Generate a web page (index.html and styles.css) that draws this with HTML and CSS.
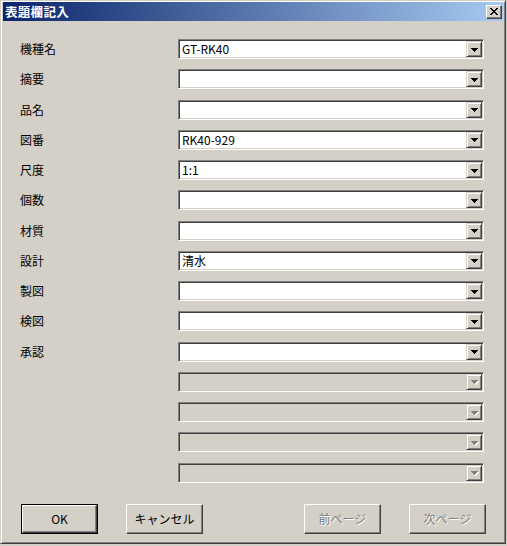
FILE: index.html
```html
<!DOCTYPE html>
<html lang="ja">
<head>
<meta charset="utf-8">
<title>表題欄記入</title>
<link rel="stylesheet" href="styles.css">
</head>
<body>
<div class="window">
  <div class="titlebar">
    <span class="title">表題欄記入</span>
    <span class="close"><svg width="8" height="7" viewBox="0 0 8 7" shape-rendering="crispEdges"><path fill="#000" d="M0 0h2v1H0zM6 0h2v1H6zM1 1h2v1H1zM5 1h2v1H5zM2 2h4v1H2zM3 3h2v1H3zM2 4h4v1H2zM1 5h2v1H1zM5 5h2v1H5zM0 6h2v1H0zM6 6h2v1H6z"/></svg></span>
  </div>
  <div class="client">
    <div class="form">
      <div class="label">機種名</div>
      <div class="combo"><span class="value">GT-RK40</span><span class="drop"><svg width="7" height="4" viewBox="0 0 7 4" shape-rendering="crispEdges"><path fill="#000" d="M0 0h7v1H0zM1 1h5v1H1zM2 2h3v1H2zM3 3h1v1H3z"/></svg></span></div>

      <div class="label">摘要</div>
      <div class="combo"><span class="value"></span><span class="drop"><svg width="7" height="4" viewBox="0 0 7 4" shape-rendering="crispEdges"><path fill="#000" d="M0 0h7v1H0zM1 1h5v1H1zM2 2h3v1H2zM3 3h1v1H3z"/></svg></span></div>

      <div class="label">品名</div>
      <div class="combo"><span class="value"></span><span class="drop"><svg width="7" height="4" viewBox="0 0 7 4" shape-rendering="crispEdges"><path fill="#000" d="M0 0h7v1H0zM1 1h5v1H1zM2 2h3v1H2zM3 3h1v1H3z"/></svg></span></div>

      <div class="label">図番</div>
      <div class="combo"><span class="value">RK40-929</span><span class="drop"><svg width="7" height="4" viewBox="0 0 7 4" shape-rendering="crispEdges"><path fill="#000" d="M0 0h7v1H0zM1 1h5v1H1zM2 2h3v1H2zM3 3h1v1H3z"/></svg></span></div>

      <div class="label">尺度</div>
      <div class="combo"><span class="value">1:1</span><span class="drop"><svg width="7" height="4" viewBox="0 0 7 4" shape-rendering="crispEdges"><path fill="#000" d="M0 0h7v1H0zM1 1h5v1H1zM2 2h3v1H2zM3 3h1v1H3z"/></svg></span></div>

      <div class="label">個数</div>
      <div class="combo"><span class="value"></span><span class="drop"><svg width="7" height="4" viewBox="0 0 7 4" shape-rendering="crispEdges"><path fill="#000" d="M0 0h7v1H0zM1 1h5v1H1zM2 2h3v1H2zM3 3h1v1H3z"/></svg></span></div>

      <div class="label">材質</div>
      <div class="combo"><span class="value"></span><span class="drop"><svg width="7" height="4" viewBox="0 0 7 4" shape-rendering="crispEdges"><path fill="#000" d="M0 0h7v1H0zM1 1h5v1H1zM2 2h3v1H2zM3 3h1v1H3z"/></svg></span></div>

      <div class="label">設計</div>
      <div class="combo"><span class="value">清水</span><span class="drop"><svg width="7" height="4" viewBox="0 0 7 4" shape-rendering="crispEdges"><path fill="#000" d="M0 0h7v1H0zM1 1h5v1H1zM2 2h3v1H2zM3 3h1v1H3z"/></svg></span></div>

      <div class="label">製図</div>
      <div class="combo"><span class="value"></span><span class="drop"><svg width="7" height="4" viewBox="0 0 7 4" shape-rendering="crispEdges"><path fill="#000" d="M0 0h7v1H0zM1 1h5v1H1zM2 2h3v1H2zM3 3h1v1H3z"/></svg></span></div>

      <div class="label">検図</div>
      <div class="combo"><span class="value"></span><span class="drop"><svg width="7" height="4" viewBox="0 0 7 4" shape-rendering="crispEdges"><path fill="#000" d="M0 0h7v1H0zM1 1h5v1H1zM2 2h3v1H2zM3 3h1v1H3z"/></svg></span></div>

      <div class="label">承認</div>
      <div class="combo"><span class="value"></span><span class="drop"><svg width="7" height="4" viewBox="0 0 7 4" shape-rendering="crispEdges"><path fill="#000" d="M0 0h7v1H0zM1 1h5v1H1zM2 2h3v1H2zM3 3h1v1H3z"/></svg></span></div>

      <div class="label"></div>
      <div class="combo disabled"><span class="value"></span><span class="drop"><svg width="8" height="5" viewBox="0 0 8 5" shape-rendering="crispEdges"><path fill="#fff" d="M1 1h7v1H1zM2 2h5v1H2zM3 3h3v1H3zM4 4h1v1H4z"/><path fill="#808080" d="M0 0h7v1H0zM1 1h5v1H1zM2 2h3v1H2zM3 3h1v1H3z"/></svg></span></div>

      <div class="label"></div>
      <div class="combo disabled"><span class="value"></span><span class="drop"><svg width="8" height="5" viewBox="0 0 8 5" shape-rendering="crispEdges"><path fill="#fff" d="M1 1h7v1H1zM2 2h5v1H2zM3 3h3v1H3zM4 4h1v1H4z"/><path fill="#808080" d="M0 0h7v1H0zM1 1h5v1H1zM2 2h3v1H2zM3 3h1v1H3z"/></svg></span></div>

      <div class="label"></div>
      <div class="combo disabled"><span class="value"></span><span class="drop"><svg width="8" height="5" viewBox="0 0 8 5" shape-rendering="crispEdges"><path fill="#fff" d="M1 1h7v1H1zM2 2h5v1H2zM3 3h3v1H3zM4 4h1v1H4z"/><path fill="#808080" d="M0 0h7v1H0zM1 1h5v1H1zM2 2h3v1H2zM3 3h1v1H3z"/></svg></span></div>

      <div class="label"></div>
      <div class="combo disabled"><span class="value"></span><span class="drop"><svg width="8" height="5" viewBox="0 0 8 5" shape-rendering="crispEdges"><path fill="#fff" d="M1 1h7v1H1zM2 2h5v1H2zM3 3h3v1H3zM4 4h1v1H4z"/><path fill="#808080" d="M0 0h7v1H0zM1 1h5v1H1zM2 2h3v1H2zM3 3h1v1H3z"/></svg></span></div>
    </div>

    <div class="buttons">
      <div class="group">
        <div class="btn default"><span class="btn-face">OK</span></div>
        <div class="btn"><span class="btn-face">キャンセル</span></div>
      </div>
      <div class="group">
        <div class="btn disabled"><span class="btn-face">前ページ</span></div>
        <div class="btn disabled"><span class="btn-face">次ページ</span></div>
      </div>
    </div>
  </div>
</div>
</body>
</html>
```

FILE: styles.css
```css
html, body {
  margin: 0;
  padding: 0;
  background: #d4d0c8;
}

body {
  font-family: "Noto Sans CJK JP", "Noto Sans", sans-serif;
  font-size: 12px;
  color: #000;
}

.window {
  box-sizing: border-box;
  width: 506px;
  height: 544px;
  background: #d4d0c8;
  border: 1px solid;
  border-color: #d4d0c8 #404040 #404040 #d4d0c8;
  box-shadow: inset 1px 1px 0 #ffffff, inset -1px -1px 0 #808080;
  padding: 1px 2px 2px 2px;
  display: flex;
  flex-direction: column;
}

.titlebar {
  height: 19px;
  flex: none;
  display: flex;
  align-items: center;
  justify-content: space-between;
  padding: 0 1px 0 2px;
  background: linear-gradient(to right, #0a246a, #a6caf0);
}

.title {
  color: #ffffff;
  font-weight: bold;
  font-size: 12.5px;
  line-height: 19px;
  letter-spacing: 0.3px;
}

.close {
  box-sizing: border-box;
  width: 16px;
  height: 14px;
  display: flex;
  align-items: center;
  justify-content: center;
  background: #d4d0c8;
  border: 1px solid;
  border-color: #ffffff #404040 #404040 #ffffff;
  box-shadow: inset -1px -1px 0 #808080;
  padding: 0 1px 1px 0;
}

.close svg {
  display: block;
}

.client {
  flex: 1;
  display: flex;
  flex-direction: column;
}

.form {
  display: grid;
  grid-template-columns: 158px 306px;
  grid-auto-rows: 20px;
  row-gap: 10.25px;
  padding: 18px 0 0 17px;
}

.label {
  line-height: 20px;
  font-size: 12px;
  white-space: nowrap;
}

.combo {
  box-sizing: border-box;
  height: 20px;
  display: flex;
  background: #ffffff;
  border: 1px solid;
  border-color: #808080 #ffffff #ffffff #808080;
  box-shadow: inset 1px 1px 0 #404040, inset -1px -1px 0 #d4d0c8;
  padding: 1px;
}

.combo.disabled {
  background: #d4d0c8;
}

.value {
  flex: 1;
  line-height: 16px;
  padding-left: 2px;
  font-size: 12px;
  white-space: nowrap;
  overflow: hidden;
}

.drop {
  box-sizing: border-box;
  width: 16px;
  height: 16px;
  flex: none;
  display: flex;
  align-items: center;
  justify-content: center;
  background: #d4d0c8;
  border: 1px solid;
  border-color: #d4d0c8 #404040 #404040 #d4d0c8;
  box-shadow: inset 1px 1px 0 #ffffff, inset -1px -1px 0 #808080;
  padding: 1px 0 0 0;
}

.combo.disabled .drop {
  padding: 2px 0 0 1px;
}

.drop svg {
  display: block;
}

.buttons {
  display: flex;
  justify-content: space-between;
  padding: 0 17px 0 18px;
  margin-top: 21px;
}

.group {
  display: flex;
  gap: 28px;
}

.btn {
  box-sizing: border-box;
  width: 77px;
  height: 30px;
  background: #d4d0c8;
  border: 1px solid;
  border-color: #ffffff #404040 #404040 #ffffff;
  box-shadow: inset -1px -1px 0 #808080;
  display: flex;
}

.btn-face {
  flex: 1;
  display: flex;
  align-items: center;
  justify-content: center;
  font-size: 12px;
  padding-bottom: 1px;
}

.btn.default {
  border: 1px solid #000000;
  box-shadow: none;
}

.btn.default .btn-face {
  border: 1px solid;
  border-color: #ffffff #404040 #404040 #ffffff;
  box-shadow: inset -1px -1px 0 #808080;
}

.btn.disabled .btn-face {
  color: #808080;
  text-shadow: 1px 1px 0 #ffffff;
}
```
